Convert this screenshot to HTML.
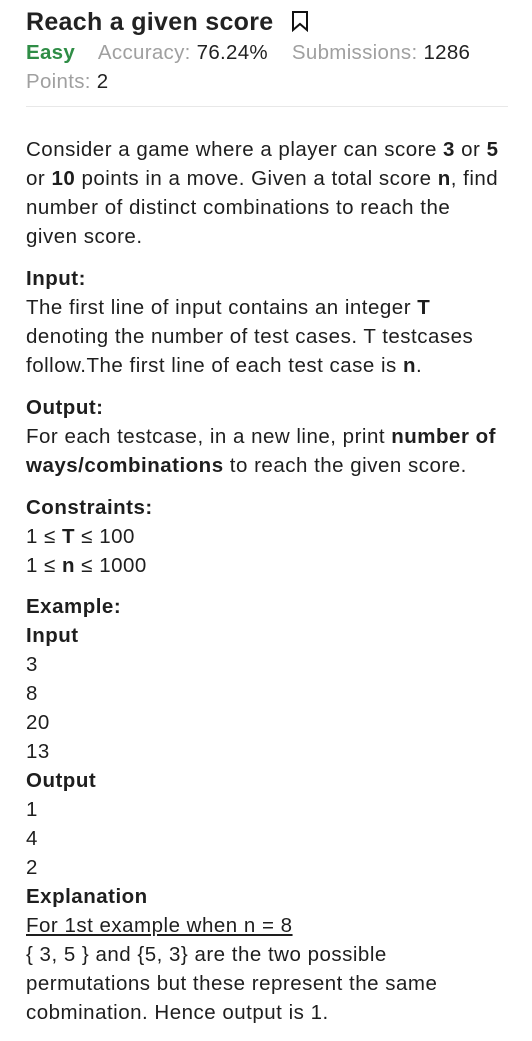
<!DOCTYPE html>
<html><head><meta charset="utf-8"><style>
body{margin:0;width:532px;height:1041px;background:#fff;font-family:"Liberation Sans",sans-serif;color:#1e1e1e;overflow:hidden}
.w{position:absolute;left:26px;top:0;width:482px}
h1{margin:0;position:absolute;top:8px;left:0;font-size:25px;font-weight:bold;color:#222;white-space:nowrap;letter-spacing:0.3px}
.meta{position:absolute;top:41px;left:0;font-size:20.5px;color:#a0a0a0;white-space:nowrap;letter-spacing:0.3px}
.meta b{font-weight:normal;color:#222}
.pts{position:absolute;top:70px;left:0;font-size:20.5px;color:#a0a0a0;letter-spacing:0.3px}
.pts b{font-weight:normal;color:#222}
hr{position:absolute;top:106px;left:0;width:482px;margin:0;border:0;border-top:1px solid #e8e8e8}
.c{position:absolute;top:135px;left:0;width:520px;font-size:20.5px;line-height:29px;white-space:nowrap;letter-spacing:0.5px}
p{margin:0 0 13px 0}
p.x{margin-bottom:12px}
.c b{font-weight:bold}
</style></head><body><div class="w">
<h1>Reach a given score <svg width="18" height="22" viewBox="0 0 18 22" style="vertical-align:-2px;margin-left:10px"><path d="M2 2H16V20L9 14L2 20Z" fill="none" stroke="#111" stroke-width="2"/></svg></h1>
<div class="meta"><span style="color:#2f8d46;font-weight:bold">Easy</span>&nbsp;&nbsp;&nbsp; Accuracy: <b>76.24%</b>&nbsp;&nbsp;&nbsp; Submissions: <b>1286</b></div>
<div class="pts">Points: <b>2</b></div>
<hr>
<div class="c">
<p>Consider a game where a player can score <b>3</b> or <b>5</b><br>or <b>10</b> points in a move. Given a total score <b>n</b>, find<br>number of distinct combinations to reach the<br>given score.</p>
<p><b>Input:</b><br>The first line of input contains an integer <b>T</b><br>denoting the number of test cases. T testcases<br>follow.The first line of each test case is <b>n</b>.</p>
<p><b>Output:</b><br>For each testcase, in a new line, print <b>number of</b><br><b>ways/combinations</b> to reach the given score.</p>
<p class="x"><b>Constraints:</b><br>1 ≤ <b>T</b> ≤ 100<br>1 ≤ <b>n</b> ≤ 1000</p>
<p><b>Example:</b><br><b>Input</b><br>3<br>8<br>20<br>13<br><b>Output</b><br>1<br>4<br>2<br><b>Explanation</b><br><u>For 1st example when n = 8</u><br>{ 3, 5 } and {5, 3} are the two possible<br>permutations but these represent the same<br>cobmination. Hence output is 1.</p>
</div></div></body></html>
